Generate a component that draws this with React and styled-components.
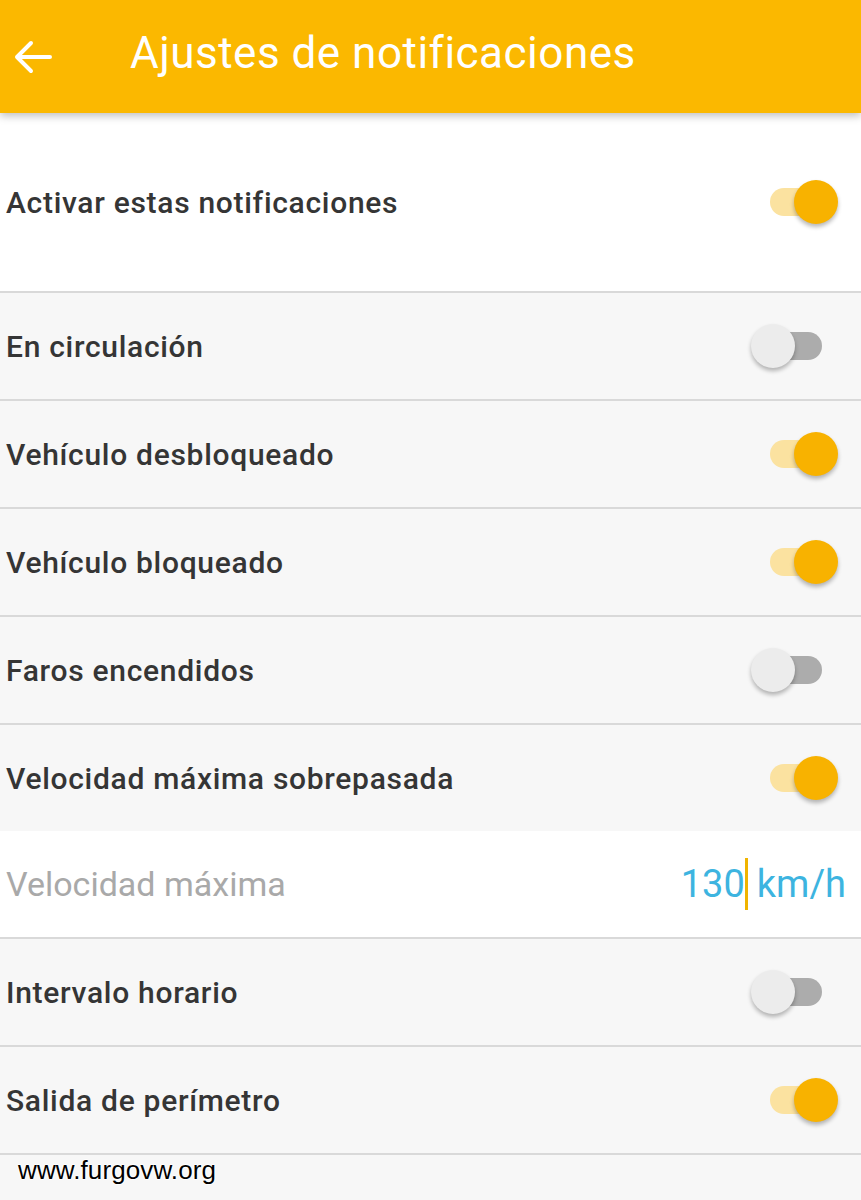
import React from 'react'
import styled, { createGlobalStyle } from 'styled-components'

const GlobalStyle = createGlobalStyle`
  html, body {
    margin: 0;
    padding: 0;
    background: #f7f7f7;
  }
  body {
    font-family: Roboto, 'Noto Sans', sans-serif;
  }
`

const Page = styled.div`
  width: 861px;
  min-height: 1200px;
  background: #f7f7f7;
  display: flex;
  flex-direction: column;
`

const TopBar = styled.header`
  height: 113px;
  background: #fbb800;
  display: flex;
  align-items: center;
  box-shadow: 0 3px 8px rgba(0, 0, 0, 0.25);
  position: relative;
  z-index: 2;
`

const BackButton = styled.button`
  border: none;
  background: none;
  padding: 0 0 0 14px;
  width: 130px;
  height: 100%;
  display: flex;
  align-items: center;
  cursor: pointer;
`

const Title = styled.h1`
  margin: 0;
  color: #fff;
  font-family: Roboto, sans-serif;
  font-weight: 400;
  font-size: 44px;
  letter-spacing: 0.5px;
  margin-top: -8px;
`

const List = styled.div`
  display: flex;
  flex-direction: column;
`

const Row = styled.div`
  height: ${p => p.$tall ? '178px' : '106px'};
  background: ${p => p.$white ? '#ffffff' : '#f7f7f7'};
  border-bottom: ${p => p.$noLine ? 'none' : '2px solid #d9d9d9'};
  display: flex;
  align-items: center;
  justify-content: space-between;
  padding: 0 23px 0 6px;
`

const Label = styled.span`
  font-family: Roboto, sans-serif;
  font-weight: 500;
  font-size: 30px;
  letter-spacing: 0.7px;
  color: #353535;
`

const HintLabel = styled.span`
  font-family: Roboto, sans-serif;
  font-weight: 400;
  font-size: 34px;
  color: #a9a9a9;
`

const SpeedValue = styled.span`
  font-family: Roboto, sans-serif;
  font-size: 38px;
  color: #3db4e0;
  display: flex;
  align-items: center;
  margin-right: -8px;
`

const Caret = styled.span`
  display: inline-block;
  width: 3px;
  height: 52px;
  background: #f0b400;
  margin: 0 9px 0 0;
`

const SwitchBox = styled.div`
  position: relative;
  width: 87px;
  height: 44px;
  flex-shrink: 0;
`

const Track = styled.div`
  position: absolute;
  left: 19px;
  top: 8px;
  width: 52px;
  height: 28px;
  border-radius: 14px;
  background: ${p => p.$on ? '#fbe2a0' : '#acacac'};
`

const Thumb = styled.div`
  position: absolute;
  top: 0;
  left: ${p => p.$on ? '43px' : '0'};
  width: 44px;
  height: 44px;
  border-radius: 50%;
  background: ${p => p.$on ? '#f8b200' : '#ececec'};
  box-shadow: 0 3px 4px rgba(0, 0, 0, 0.28);
`

const Watermark = styled.div`
  padding: 2px 0 0 18px;
  font-family: 'Liberation Sans', Arial, sans-serif;
  font-size: 26px;
  color: #000;
  letter-spacing: 0.1px;
  line-height: 26px;
  text-shadow: 1px 0 0 #fff, -1px 0 0 #fff, 0 1px 0 #fff, 0 -1px 0 #fff;
`

const Switch = ({ on }) => (
  <SwitchBox>
    <Track $on={on} />
    <Thumb $on={on} />
  </SwitchBox>
)

const BackArrow = () => (
  <svg width="38" height="34" viewBox="0 0 38 34" fill="none" stroke="#fff" strokeWidth="4" strokeLinecap="round" strokeLinejoin="round">
    <path d="M36 17H3M17 3L3 17l14 14" />
  </svg>
)

const items = [
  { label: 'En circulación', on: false },
  { label: 'Vehículo desbloqueado', on: true },
  { label: 'Vehículo bloqueado', on: true },
  { label: 'Faros encendidos', on: false },
]

const App = () => {
  return (
    <Page>
      <GlobalStyle />
      <TopBar>
        <BackButton aria-label="Volver">
          <BackArrow />
        </BackButton>
        <Title>Ajustes de notificaciones</Title>
      </TopBar>
      <List>
        <Row $tall $white>
          <Label>Activar estas notificaciones</Label>
          <Switch on />
        </Row>
        {items.map(it => (
          <Row key={it.label}>
            <Label>{it.label}</Label>
            <Switch on={it.on} />
          </Row>
        ))}
        <Row $noLine>
          <Label>Velocidad máxima sobrepasada</Label>
          <Switch on />
        </Row>
        <Row $white>
          <HintLabel>Velocidad máxima</HintLabel>
          <SpeedValue>130<Caret />km/h</SpeedValue>
        </Row>
        <Row>
          <Label>Intervalo horario</Label>
          <Switch on={false} />
        </Row>
        <Row>
          <Label>Salida de perímetro</Label>
          <Switch on />
        </Row>
      </List>
      <Watermark>www.furgovw.org</Watermark>
    </Page>
  )
}

export default App
